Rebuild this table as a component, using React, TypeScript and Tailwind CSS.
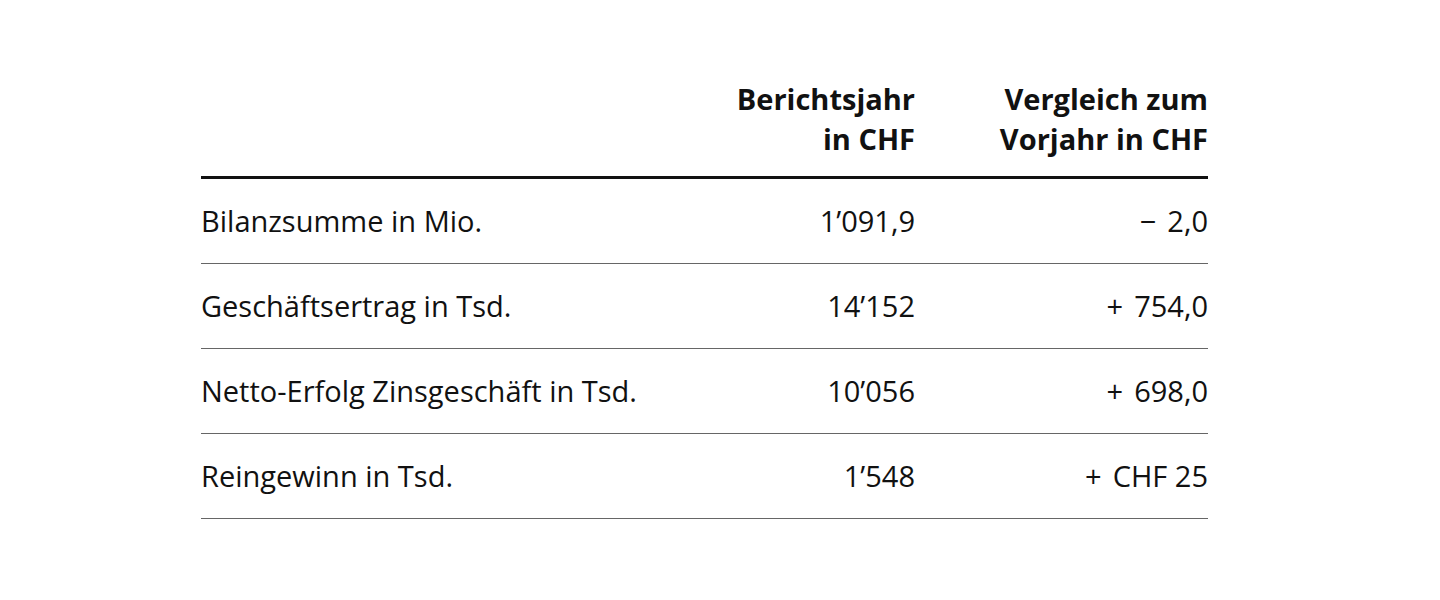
const rows = [
  { label: 'Bilanzsumme in Mio.', year: '1’091,9', sign: '−', diff: '2,0' },
  { label: 'Geschäftsertrag in Tsd.', year: '14’152', sign: '+', diff: '754,0' },
  { label: 'Netto-Erfolg Zinsgeschäft in Tsd.', year: '10’056', sign: '+', diff: '698,0' },
  { label: 'Reingewinn in Tsd.', year: '1’548', sign: '+', diff: 'CHF 25' },
];

export default function App() {
  return (
    <div
      className="w-[1440px] h-[600px] bg-white text-[#111] pt-[79px] pl-[201px]"
      style={{ fontFamily: '"Open Sans", "Noto Sans", sans-serif' }}
    >
      <div className="w-[1007px]">
        {/* Header */}
        <div className="grid grid-cols-[1fr_260px_293px] pb-[17px] border-b-[3px] border-[#111] text-[29px] leading-[40px] font-bold">
          <div />
          <div className="text-right">
            Berichtsjahr
            <br />
            in CHF
          </div>
          <div className="text-right">
            Vergleich zum
            <br />
            Vorjahr in CHF
          </div>
        </div>

        {/* Rows */}
        {rows.map((r) => (
          <div
            key={r.label}
            className="grid grid-cols-[1fr_260px_293px] items-center h-[85px] border-b border-[#666] text-[29px]"
          >
            <div>{r.label}</div>
            <div className="text-right">{r.year}</div>
            <div className="text-right">
              <span className="mr-[11px]">{r.sign}</span>
              {r.diff}
            </div>
          </div>
        ))}
      </div>
    </div>
  );
}
